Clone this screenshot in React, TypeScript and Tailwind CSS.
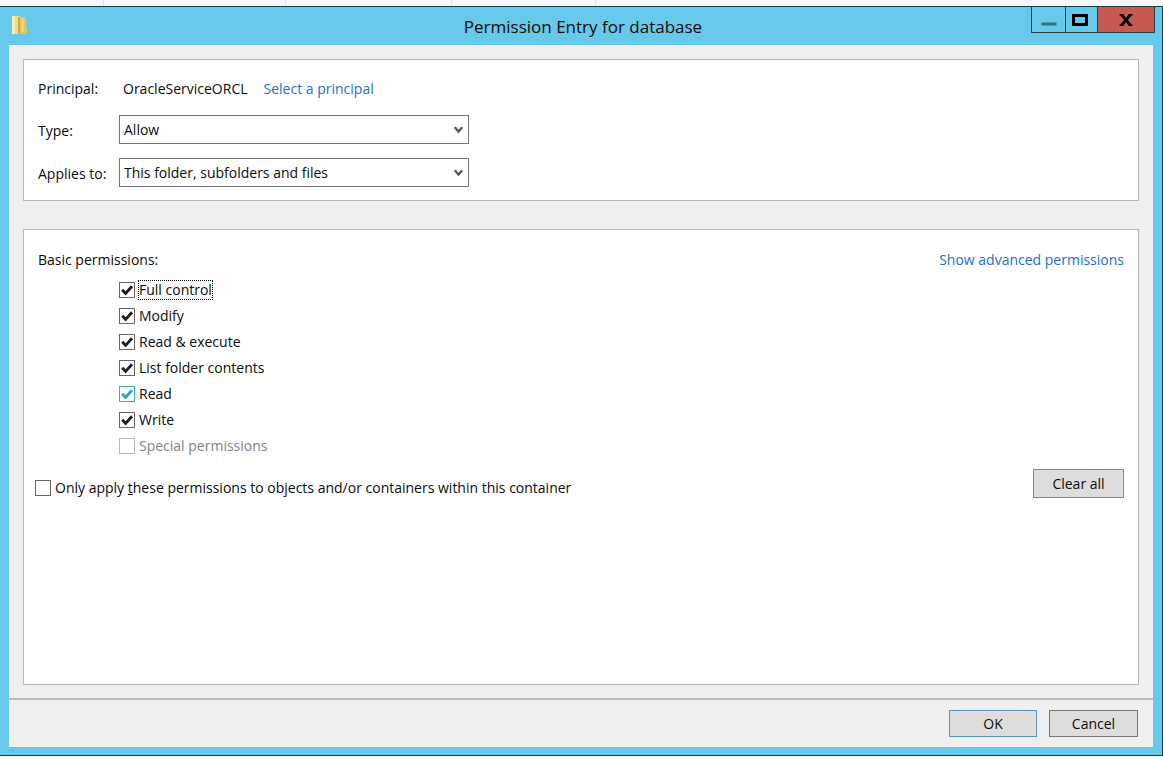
const permissions = [
    { id: "full", label: "Full control", checked: true, focused: true },
    { id: "modify", label: "Modify", checked: true },
    { id: "execute", label: "Read & execute", checked: true },
    { id: "list", label: "List folder contents", checked: true },
    { id: "read", label: "Read", checked: true, hot: true },
    { id: "write", label: "Write", checked: true },
    { id: "special", label: "Special permissions", checked: false, disabled: true },
];

function FolderIcon() {
    return (
        <svg className="h-5 w-[18px]" viewBox="0 0 18 20" aria-hidden="true">
            <path d="M1 1h8v18H1z" fill="#f0dc85" />
            <path d="M1 1h3v18H1z" fill="#f8eeb4" />
            <path d="M8 2h7v9l1 1v6l-1 1H8z" fill="#e3c362" />
            <path d="M7 2l2 1v16l-2-1z" fill="#cda94a" />
            <path d="M10 3h3v14h-3z" fill="#ecd27a" />
        </svg>
    );
}

function CheckBox({ id, checked, disabled, hot }: { id: string; checked?: boolean; disabled?: boolean; hot?: boolean }) {
    const border = hot ? "border-[#3aa5dc]" : disabled ? "border-[#b5b5b5]" : "border-[#666666]";
    return (
        <span className="grid size-4 shrink-0">
            <input
                id={id}
                type="checkbox"
                defaultChecked={checked}
                disabled={disabled}
                className={`peer col-start-1 row-start-1 size-4 appearance-none border bg-white ${border}`}
            />
            <svg
                className={`pointer-events-none invisible col-start-1 row-start-1 size-4 peer-checked:visible ${hot ? "text-[#2a9fdc]" : "text-[#1e1e1e]"}`}
                viewBox="0 0 16 16"
                aria-hidden="true"
            >
                <path d="M3.2 7.8l3.4 3.7L13 4.3" fill="none" stroke="currentColor" strokeWidth="2.8" />
            </svg>
        </span>
    );
}

function DropDown({ id, value }: { id: string; value: string }) {
    return (
        <span className="grid w-[350px] items-center">
            <select
                id={id}
                className="col-start-1 row-start-1 h-[29px] appearance-none border border-[#777777] bg-white pl-1 pr-6"
            >
                <option>{value}</option>
            </select>
            <svg
                className="pointer-events-none col-start-1 row-start-1 mr-[6px] h-2 w-[9px] justify-self-end"
                viewBox="0 0 9 8"
                aria-hidden="true"
            >
                <path d="M0.8 1.2L4.5 5.6L8.2 1.2" fill="none" stroke="#5c5c5c" strokeWidth="2.4" />
            </svg>
        </span>
    );
}

function TitleBar() {
    return (
        <header className="grid h-[38px] shrink-0 grid-cols-[1fr_auto_1fr] pl-[11px] pr-[7px]">
            <div className="pt-2">
                <FolderIcon />
            </div>
            <h1 className="self-center pt-0.5 text-[17px]">Permission Entry for database</h1>
            <div className="flex h-[26px] justify-self-end border-x border-b border-[#24424d]">
                <button aria-label="Minimize" className="flex w-[33px] items-center justify-center">
                    <svg className="size-4" viewBox="0 0 16 16" aria-hidden="true">
                        <path d="M0.5 12h15" stroke="#35707f" strokeWidth="3" />
                    </svg>
                </button>
                <button aria-label="Maximize" className="flex w-8 items-center justify-center border-l border-[#24424d] pr-[3px]">
                    <svg className="h-3 w-4" viewBox="0 0 16 12" aria-hidden="true">
                        <rect x="1.5" y="1.5" width="13" height="9" fill="none" stroke="black" strokeWidth="3" />
                    </svg>
                </button>
                <button aria-label="Close" className="flex w-[57px] items-center justify-center border-l border-[#24424d] bg-[#c75a50]">
                    <svg className="h-3 w-[14px]" viewBox="0 0 14 12" aria-hidden="true">
                        <path d="M2.5 0.5L11.5 11.5M11.5 0.5L2.5 11.5" stroke="black" strokeWidth="2.8" />
                        <path d="M0.5 0.8h4M9.5 0.8h4M0.5 11.2h4M9.5 11.2h4" stroke="black" strokeWidth="1.5" />
                    </svg>
                </button>
            </div>
        </header>
    );
}

function PrincipalPanel() {
    return (
        <section className="flex flex-col gap-[14px] border border-[#b9b9b9] bg-white px-[14px] pb-[13px] pt-5">
            <div className="flex h-[21px] items-start">
                <span className="w-[85px]">Principal:</span>
                <span>OracleServiceORCL</span>
                <a href="#principal" className="ml-4 text-[#1c6fd2]">Select a principal</a>
            </div>
            <div className="flex items-center">
                <label htmlFor="type" className="w-[81px] pt-0.5">Type:</label>
                <DropDown id="type" value="Allow" />
            </div>
            <div className="flex items-center">
                <label htmlFor="applies" className="w-[81px] pt-0.5">Applies to:</label>
                <DropDown id="applies" value="This folder, subfolders and files" />
            </div>
        </section>
    );
}

function PermissionsPanel() {
    return (
        <section className="mt-7 flex-1 border border-[#b9b9b9] bg-white pl-[11px] pr-[14px] pt-5">
            <div className="flex h-5 items-center justify-between pl-[3px]">
                <h2>Basic permissions:</h2>
                <a href="#advanced" className="text-[#1c6fd2]">Show advanced permissions</a>
            </div>
            <ul className="mt-[7px] pl-[84px]">
                {permissions.map((p) => (
                    <li key={p.id} className="flex h-[26px] items-center gap-[3px]">
                        <CheckBox id={p.id} checked={p.checked} disabled={p.disabled} hot={p.hot} />
                        <label
                            htmlFor={p.id}
                            className={`border border-dotted ${p.focused ? "border-black" : "border-transparent"} ${p.disabled ? "text-[#838383]" : ""}`}
                        >
                            {p.label}
                        </label>
                    </li>
                ))}
            </ul>
            <div className="mt-[10px] flex items-end justify-between">
                <div className="flex h-5 items-center gap-1">
                    <CheckBox id="only" />
                    <label htmlFor="only">
                        Only apply <u>t</u>hese permissions to objects and/or containers within this container
                    </label>
                </div>
                <button className="h-[29px] w-[91px] border border-[#888888] bg-[#dddddd]">Clear all</button>
            </div>
        </section>
    );
}

export default function App() {
    return (
        <div className="flex h-screen flex-col bg-white pb-[3px] font-['Open_Sans','Noto_Sans',sans-serif] text-[14px] leading-[18px] text-[#0c0c0c]">
            <div className="grid h-[6px] shrink-0 grid-cols-[104fr_182fr_166fr_144fr_567fr] divide-x divide-[#dfe2e6] bg-[#f7f8fa]">
                <span></span>
                <span></span>
                <span></span>
                <span></span>
                <span></span>
            </div>
            <div className="flex min-h-0 flex-1 flex-col border-y border-r border-[#1d3a45] bg-[#66c9e9]">
                <TitleBar />
                <main className="mx-[9px] mb-2 flex flex-1 flex-col bg-[#efefef]">
                    <div className="flex flex-1 flex-col px-[14px] pb-[13px] pt-[14px]">
                        <PrincipalPanel />
                        <PermissionsPanel />
                    </div>
                    <footer className="flex justify-end gap-3 border-t-2 border-[#bdbdbd] pb-[10px] pr-[15px] pt-[10px]">
                        <button className="h-[27px] w-[88px] border border-[#5a94c4] bg-[#dddddd]">OK</button>
                        <button className="h-[27px] w-[89px] border border-[#777777] bg-[#dddddd]">Cancel</button>
                    </footer>
                </main>
            </div>
        </div>
    );
}
